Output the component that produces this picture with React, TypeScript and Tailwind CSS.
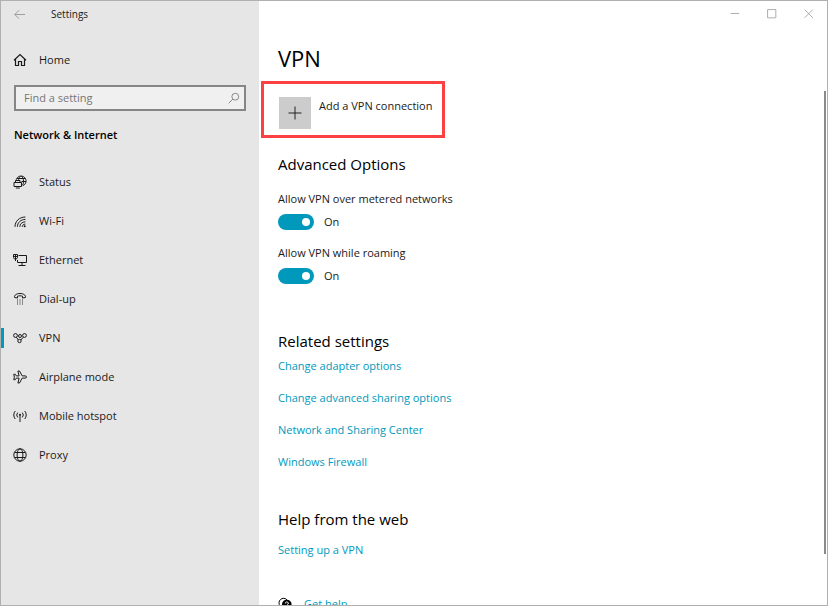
import { useState, type ReactNode } from 'react';

function Icon({ children, size = 14 }: { children: ReactNode; size?: number }) {
  return (
    <svg
      width={size}
      height={size}
      viewBox="0 0 14 14"
      fill="none"
      stroke="currentColor"
      strokeWidth="1"
      className="shrink-0"
      aria-hidden="true"
    >
      {children}
    </svg>
  );
}

const navItems = [
  {
    label: 'Status',
    icon: (
      <>
        <path d="M3.200 4.800A5 5 0 1 1 9.800 10.700M4 3.500h8.400M8.500 6.500h4.500M7.500 1C6.200 2.200 5.700 3.200 5.600 4.800M8.500 1c1.400 1.600 2 3.200 2 5.200 0 1.600-.3 2.800-.8 4" />
        <path d="M1 7.500h7.500v4H1zM2.800 13h4M2.500 7.500v-2H7v2" />
      </>
    ),
  },
  {
    label: 'Wi-Fi',
    icon: (
      <>
        <path d="M2 12.800C2 7.200 6.400 3 12.400 3M4.400 12.800c0-4.200 3.400-7.400 8-7.400M6.800 12.800c0-2.800 2.400-5 5.600-5M9.200 12.800c0-1.600 1.400-2.700 3.200-2.700" />
        <circle cx="11.700" cy="12.300" r="1" fill="currentColor" stroke="none" />
      </>
    ),
  },
  {
    label: 'Ethernet',
    icon: (
      <>
        <path d="M5.500 2.500h8v7h-9V7M9 9.500v3M5.500 12.500h7" />
        <path d="M.5 1.500h4v3L3.500 6h-2l-1-1.500zM.5 3.500h4M2.500 1.500v6.500" />
      </>
    ),
  },
  {
    label: 'Dial-up',
    icon: (
      <>
        <path d="M1.500 5.500C1 2.800 4 1.500 7 1.500s6 1.300 5.500 4L9.500 6V4.200C8 3.700 6 3.700 4.500 4.200V6z" />
        <path
          d="M4 8h1M6.500 8h1M9 8h1M4 10h1M6.500 10h1M9 10h1M4 12h1M6.500 12h1M9 12h1"
          strokeWidth=".9"
        />
      </>
    ),
  },
  {
    label: 'VPN',
    icon: (
      <>
        <circle cx="2.500" cy="4.500" r="1.900" />
        <circle cx="7" cy="5" r="1.500" />
        <circle cx="11.500" cy="4.500" r="1.900" />
        <circle cx="6.500" cy="10" r="1.700" />
        <path d="M3.400 6.200 5.200 8.900M10.400 6.100 7.900 9" />
      </>
    ),
  },
  {
    label: 'Airplane mode',
    icon: (
      <path d="M13.500 7c0-.7-.6-1.100-1.300-1.100H9.200L6.500 1H4.900l1.200 4.900H3.300L2.300 4.300H.7L1.400 7 .7 9.700h1.600l1-1.600h2.800L4.900 13h1.600l2.700-4.900h3c.7 0 1.300-.4 1.300-1.100z" />
    ),
  },
  {
    label: 'Mobile hotspot',
    icon: (
      <>
        <path d="M2.300 2a6 6 0 0 0 0 8M4.700 3.600a3.700 3.700 0 0 0 0 4.800M11.700 2a6 6 0 0 1 0 8M9.300 3.600a3.700 3.700 0 0 1 0 4.800M7 6v7" />
        <circle cx="7" cy="5.800" r="1" fill="currentColor" stroke="none" />
      </>
    ),
  },
  {
    label: 'Proxy',
    icon: (
      <>
        <circle cx="7" cy="7" r="6.200" />
        <ellipse cx="7" cy="7" rx="2.900" ry="6.200" />
        <path d="M1.500 4.500h11M1.500 9.500h11" />
      </>
    ),
  },
];

const relatedLinks = [
  'Change adapter options',
  'Change advanced sharing options',
  'Network and Sharing Center',
  'Windows Firewall',
];

function Toggle({ label }: { label: string }) {
  const [on, setOn] = useState(true);

  return (
    <label className="block w-fit cursor-pointer">
      <span className="block h-5 leading-5">{label}</span>
      <span className="flex items-center h-[34px] pb-2">
        <input
          type="checkbox"
          role="switch"
          checked={on}
          onChange={(e) => setOn(e.target.checked)}
          className="peer sr-only"
        />
        <span className="flex items-center justify-start w-9 h-4 px-1 rounded-full bg-[#999] peer-checked:bg-[#0099bc] peer-checked:justify-end">
          <span className="w-2 h-2 rounded-full bg-white" />
        </span>
        <span className="pl-[10px]">{on ? 'On' : 'Off'}</span>
      </span>
    </label>
  );
}

function Sidebar() {
  const [active, setActive] = useState('VPN');

  return (
    <aside className="w-[258px] shrink-0 bg-[#e6e6e6]">
      <header className="flex items-center h-[26px] pl-[13px] gap-[26px]">
        <button aria-label="Back" className="text-[#999]">
          <Icon size={11}>
            <path d="M14 7H1M6.500 1.500 1 7l5.500 5.500" strokeWidth="1.200" />
          </Icon>
        </button>
        <span className="text-[10px]">Settings</span>
      </header>
      <a href="#home" className="flex items-center h-10 mt-[13px] pl-3 gap-3">
        <Icon>
          <path d="M1 7.200 7 1.500l6 5.700M2.500 6v6.500H5.500V8.500h3v4h3V6" strokeWidth="1.200" />
        </Icon>
        Home
      </a>
      <div className="flex items-center h-[26px] mt-[5px] mx-[13px] border-2 border-[#868686] bg-[#f0f0f0] pl-2 pr-1">
        <input
          type="search"
          aria-label="Find a setting"
          placeholder="Find a setting"
          className="min-w-0 flex-1 bg-transparent outline-none placeholder:text-[#767676]"
        />
        <button aria-label="Search" className="text-[#777]">
          <Icon size={12}>
            <circle cx="8.500" cy="5.500" r="4" />
            <path d="M5.600 8.400.800 13.200" />
          </Icon>
        </button>
      </div>
      <h2 className="h-[50px] pl-[13px] leading-[48px] font-semibold text-black">Network &amp; Internet</h2>
      <nav className="pt-px">
        {navItems.map((item) => (
          <a
            key={item.label}
            href={`#${item.label}`}
            onClick={() => setActive(item.label)}
            aria-current={active === item.label ? 'page' : undefined}
            className="flex items-center h-[39px]"
          >
            <span className={`w-[3px] h-5 mr-[9px] ${active === item.label ? 'bg-[#0099bc]' : ''}`} />
            <Icon>{item.icon}</Icon>
            <span className="pl-3">{item.label}</span>
          </a>
        ))}
      </nav>
    </aside>
  );
}

export default function App() {
  return (
    <div className="flex h-screen overflow-hidden border border-[#b0b0b0] bg-white font-['Open_Sans',sans-serif] text-[11px] leading-5 text-[#1a1a1a]">
      <Sidebar />
      <div className="flex flex-col flex-1 min-w-0">
        <header className="flex justify-end items-center h-[25px] shrink-0 gap-[26px] pr-[13px] text-[#999]">
          <button aria-label="Minimize">
            <Icon size={11}>
              <path d="M2 7h11" />
            </Icon>
          </button>
          <button aria-label="Maximize">
            <Icon size={11}>
              <path d="M2 2h10.500v10.500H2z" />
            </Icon>
          </button>
          <button aria-label="Close">
            <Icon size={11}>
              <path d="m2 2 10.500 10.500M12.500 2 2 12.500" />
            </Icon>
          </button>
        </header>
        <div className="flex flex-1 min-h-0">
          <main className="flex-1 min-w-0 overflow-hidden pl-[19px]">
            <h1 className="h-[55px] pt-4 text-[22px] leading-8 text-black">VPN</h1>
            <button className="flex items-start w-fit h-[57px] -ml-[17px] pt-[13px] pl-[15px] pr-[10px] gap-2 border-3 border-[#fb4141] text-left">
              <span className="grid place-items-center w-8 h-8 bg-[#ccc] text-[#222]">
                <Icon>
                  <path d="M7 .500v13M.500 7h13" />
                </Icon>
              </span>
              <span className="leading-[18px]">Add a VPN connection</span>
            </button>

            <section>
              <h2 className="h-[51px] pt-[14px] text-[15px] leading-6 text-black">Advanced Options</h2>
              <Toggle label="Allow VPN over metered networks" />
              <Toggle label="Allow VPN while roaming" />
            </section>

            <section className="pt-8">
              <h2 className="text-[15px] leading-6 text-black">Related settings</h2>
              <ul className="flex flex-col gap-3 pt-[3px]">
                {relatedLinks.map((link) => (
                  <li key={link}>
                    <a href="#related" className="text-[#0099bc] hover:text-[#666]">
                      {link}
                    </a>
                  </li>
                ))}
              </ul>
            </section>

            <section className="pt-[35px]">
              <h2 className="text-[15px] leading-6 text-black">Help from the web</h2>
              <a href="#vpn-help" className="block w-fit mt-[9px] text-[#0099bc] hover:text-[#666]">
                Setting up a VPN
              </a>
              <a href="#get-help" className="flex items-center w-fit mt-[34px] gap-3 text-[#0099bc] hover:text-[#666]">
                <span className="text-black">
                  <Icon>
                    <path d="M2.200 9A4.400 4.400 0 1 1 9 2.800M1 10.500 2.200 8.500" />
                    <circle cx="8.800" cy="7.500" r="4.800" fill="currentColor" stroke="none" />
                    <path d="M7.300 6.500a1.500 1.500 0 1 1 2.100 1.300q-.6.300-.6 1M8.800 9.700v1" stroke="#fff" />
                  </Icon>
                </span>
                Get help
              </a>
            </section>
          </main>
          <div className="w-[2px] h-[80%] mt-[65px] mr-px shrink-0 bg-[#8a8a8a]" />
        </div>
      </div>
    </div>
  );
}
